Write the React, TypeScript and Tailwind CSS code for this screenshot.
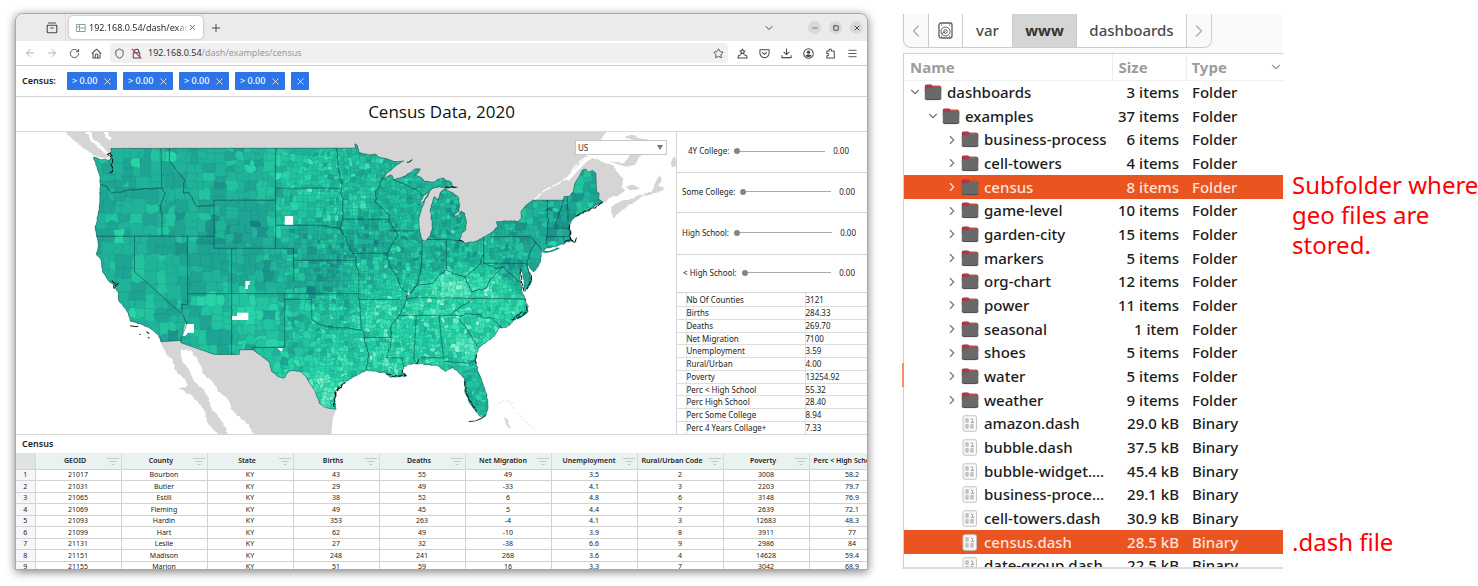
import React from "react";
import {
  ArrowLeft,
  ArrowRight,
  ChevronDown,
  ChevronLeft,
  ChevronRight,
  Menu,
  Minus,
  Plus,
  RotateCw,
  Shield,
  Square,
  Star,
  X,
} from "lucide-react";

type Point = [number, number];

/* ---------- map geometry ---------- */

const EAST = 942;

const pts = (text: string, dx = 0): Point[] =>
  text.split(" ").map((pair) => {
    const [x, y] = pair.split(",").map(Number);
    return [x + dx, y];
  });

const random = (seed: number) => () => {
  seed = (seed + 0x6d2b79f5) | 0;
  let t = Math.imul(seed ^ (seed >>> 15), 1 | seed);
  t = (t + Math.imul(t ^ (t >>> 7), 61 | t)) ^ t;
  return ((t ^ (t >>> 14)) >>> 0) / 4294967296;
};

const line = (list: Point[]) => "M" + list.map((p) => p[0].toFixed(1) + "," + p[1].toFixed(1)).join("L");

const rough = (list: Point[], amount: number, seed: number): Point[] => {
  const rnd = random(seed);
  const out: Point[] = [];
  for (let i = 0; i < list.length - 1; i++) {
    const [ax, ay] = list[i];
    const [bx, by] = list[i + 1];
    const steps = Math.max(1, Math.round(Math.hypot(bx - ax, by - ay) / 6));
    for (let s = 0; s < steps; s++) {
      const k = s / steps;
      const j = s === 0 ? 0 : amount;
      out.push([ax + (bx - ax) * k + (rnd() - 0.5) * 2 * j, ay + (by - ay) * k + (rnd() - 0.5) * 2 * j]);
    }
  }
  out.push(list[list.length - 1]);
  return out;
};

const northCoast = pts(
  "78,70 76,57 84,62 88,82 115,90 135,88 150,97 175,103 195,110 222,108 200,122 175,142 155,162 185,150 192,165 215,158 240,145 255,133 272,132 265,145 255,152 275,158 285,170 310,172 325,163 343,160 350,168 365,172 368,184 383,187 355,190 330,186 310,190 292,205 280,215 268,240 285,225 300,200 285,228 272,265 268,290 270,320 278,345 290,348 300,335 308,310 306,285 302,260 308,235 315,215 325,225 335,200 345,192 365,202 385,215 390,240 388,258 372,272 385,272 395,258 405,265 410,290 408,315 395,325 390,345 408,355 435,350 465,335 490,320 505,305 500,290 530,288 565,290 575,280 573,262 590,240 608,226",
  EAST,
);
const maine = pts("608,226 700,226 703,215 718,215 730,200 735,175 748,155 758,135 768,133 775,142 788,137 798,145 800,200 808,205 806,222 820,232", EAST);
const eastCoast = pts(
  "820,232 800,240 780,252 755,265 735,275 722,295 718,310 725,325 720,335 730,348 710,350 700,358 670,365 645,372 634,385 633,405 625,425 610,440 600,430 592,412 598,440 606,465 595,490 585,500 583,470 578,440 570,430 572,465 577,500 585,520 593,540 595,558 580,572 555,585 530,607 510,608 495,632 465,655 448,668 440,690 437,705 445,740 460,775 472,810 475,840 470,868 455,875 445,865 425,840 405,800 405,765 385,740 370,727 345,738 325,722 270,716 235,718 222,725 215,740 232,752 205,755 185,757 165,742 130,738 110,735 85,748 40,775 20,795 15,820 20,852",
  EAST,
);
const rioGrande = pts("962,852 930,847 912,835 900,800 880,770 870,752 850,738 820,737 805,760 785,752 768,738 762,712 735,690 712,674");
const southLine = pts("672,674 672,688 597,688 497,653 497,646 437,650");
const westCoast = pts(
  "437,650 430,630 405,610 380,598 345,588 340,565 310,525 310,505 297,480 282,470 262,440 258,405 244,390 250,360 240,310 252,255 255,200 255,160 245,125 235,97 260,105 285,105 290,85 287,71",
);

const outline =
  line([
    ...rough(northCoast, 1.6, 3),
    ...maine,
    ...rough(eastCoast, 2.2, 7),
    ...rough(rioGrande, 1, 9),
    ...southLine,
    ...rough(westCoast, 1.2, 11),
  ]) + "Z";

const straightBorders = [
  ...[
    "437,71 440,190", "440,265 440,334", "596,226 596,370", "596,226 781,226", "781,71 781,370",
    "596,370 834,370", "243,334 596,334", "358,334 358,440 503,570", "517,334 517,538 500,538 500,565",
    "649,370 649,688", "517,506 1030,506", "834,370 836,506", "834,406 1020,406", "808,506 808,667 712,667 712,674",
    "808,523 889,523 889,585", "781,190 978,190", "781,301 920,301",
  ].map((t) => line(pts(t))),
  ...[
    "40,283 180,283", "65,385 170,385", "180,318 270,318", "278,345 275,430", "350,345 350,435",
    "290,344 350,343 392,348", "462,335 462,415", "462,415 590,415", "480,335 600,335", "88,440 88,523",
    "88,523 210,523", "90,523 95,615", "95,615 103,620 105,637 182,637", "170,698 218,698 222,725",
    "230,522 262,518 590,522", "205,571 385,571", "260,571 253,700 262,718", "328,571 336,650 342,700",
    "275,698 342,698", "345,709 420,714 437,705", "460,578 485,578 515,607", "590,415 597,445 605,450",
    "655,310 718,310", "650,335 720,335", "700,335 705,355", "712,215 715,290",
  ].map((t) => line(pts(t, EAST))),
].join("");

const riverBorders = [
  ...[
    "255,180 275,185 290,205 330,198 380,192 440,190", "440,190 450,205 435,245 440,265",
    "463,71 463,108 490,145 508,165 505,205 520,203 545,245 595,240", "503,570 515,597 503,625 497,650",
    "889,585 920,602 960,608 990,608 1037,615", "920,301 950,308 975,310 985,330", "963,71 968,130 980,180 975,205 983,220 982,283",
  ].map((t, i) => line(rough(pts(t), 1.8, 20 + i))),
  ...[
    "40,283 30,310 50,340 60,370 80,400 82,430 88,440",
    "155,162 150,185 137,200 140,235 178,270 180,290 205,330 190,355 172,385 180,420 205,460 215,490 235,505 230,525 210,570 185,600 183,660 170,698",
    "192,165 205,170 240,185 268,200 280,215", "275,430 265,475 240,505",
    "240,505 262,480 310,475 330,450 350,435 375,447 405,455 425,440 450,420 462,385",
    "600,335 618,352 635,375", "618,352 600,385 592,412", "103,637 118,690 110,735", "388,580 410,610 445,665",
    "360,570 385,550 430,522", "388,575 410,565 450,570 460,578", "405,455 425,500 470,490 480,465 520,425",
    "462,415 500,430 520,425 545,450 575,475", "652,226 655,290 648,358", "700,226 690,260 675,305",
  ].map((t, i) => line(rough(pts(t, EAST), 1.8, 60 + i))),
].join("");

const inlets = [
  ...["285,82 290,100 288,120 292,140 283,145", "284,86 276,88 288,96", "290,466 300,475 296,490 312,472", "955,845 956,820 962,800 978,780 990,772"].map((t, i) =>
    line(rough(pts(t), 4, 200 + i)),
  ),
  ...[
    "740,272 760,264 780,254 800,244 818,232", "705,350 722,345 738,352 740,338", "718,300 722,325 722,345",
    "572,432 575,470 582,498", "604,450 602,466 592,492", "562,580 580,570 592,556 588,540", "545,585 560,575 578,560",
    "440,688 436,705 441,715", "406,768 410,800 422,828 440,858", "170,746 187,752 205,752 228,752 218,735", "262,716 266,702", "18,815 22,797 40,777",
    "232,112 250,104", "388,345 402,350", "345,187 380,187",
  ].map((t, i) => line(rough(pts(t, EAST), 2.6, 240 + i))),
].join("");

const palette = ["#8ff5d0", "#62ecc3", "#3be2b3", "#29d3a8", "#24c3a0", "#21b399", "#1fa392", "#1c928b", "#188186", "#14697a"];

const anchors = [
  [350, 120, 5.2], [340, 250, 5.2], [520, 270, 5.4], [620, 130, 5], [690, 290, 6.2], [310, 390, 5.3],
  [380, 500, 4.9], [440, 400, 5.2], [570, 420, 5.8], [740, 440, 5.4], [570, 580, 5.1], [720, 560, 3.8],
  [630, 560, 4], [860, 140, 3.8], [850, 250, 4.2], [930, 210, 3.6], [900, 350, 5.4], [920, 450, 6.2],
  [940, 560, 4], [850, 600, 4.2], [830, 690, 3.8], [910, 800, 1.6], [990, 700, 2.8], [1000, 200, 3.9],
  [1060, 340, 5.4], [1100, 460, 3.6], [1150, 250, 4.6], [1170, 400, 5], [1260, 400, 5.1], [1350, 400, 4.8],
  [1290, 290, 5], [1300, 485, 1.1], [1280, 545, 2], [1330, 660, 1.1], [1290, 600, 2.4], [1240, 640, 2.8],
  [1160, 640, 2.8], [1090, 570, 2.4], [1100, 700, 2.4], [1380, 790, 4.6], [1300, 720, 3.4], [1420, 620, 2.6],
  [1450, 570, 2.8], [1450, 500, 2.2], [1400, 460, 2.2], [1500, 440, 5.6], [1470, 370, 4.8], [1540, 290, 5],
  [1630, 300, 5.6], [1720, 190, 4.8],
];

const shade = (x: number, y: number) => {
  let sum = 0;
  let weight = 0;
  for (const [ax, ay, v] of anchors) {
    const w = 1 / Math.pow((ax - x) ** 2 + (ay - y) ** 2 + 200, 1.6);
    sum += v * w;
    weight += w;
  }
  return sum / weight;
};

const cellSize = (x: number) => (x < 620 ? 40 : x < 790 ? 34 : x < 900 ? 22 : x < 1500 ? 16 : 26);

const buildCounties = () => {
  const rnd = random(42);
  const fills = palette.map(() => "");
  const bend = (x: number, y: number): Point => {
    const calm = x > 800 && x < 1080 && y > 200 && y < 520 ? 0.3 : 1;
    const amp = calm * Math.min(3, cellSize(x) / 7);
    return [
      x + amp * (Math.sin(y * 0.17 + x * 0.05) + 0.6 * Math.sin(y * 0.53 + x * 0.13)),
      y + amp * (Math.sin(x * 0.15 + y * 0.06) + 0.6 * Math.sin(x * 0.49 + y * 0.11)),
    ];
  };
  const split = (x0: number, y0: number, x1: number, y1: number) => {
    const w = x1 - x0;
    const h = y1 - y0;
    const xm = (x0 + x1) / 2;
    const ym = (y0 + y1) / 2;
    const target = cellSize(xm) * (0.8 + rnd() * 0.6);
    if (w <= target && h <= target) {
      const spread = xm < 780 ? 1.5 : 2;
      const value = shade(xm, ym) + (rnd() + rnd() + rnd() - 1.5) * spread;
      const index = Math.max(0, Math.min(palette.length - 1, Math.round(value)));
      fills[index] +=
        line([bend(x0, y0), bend(xm, y0), bend(x1, y0), bend(x1, ym), bend(x1, y1), bend(xm, y1), bend(x0, y1), bend(x0, ym)]) + "Z";
      return;
    }
    const k = 0.36 + rnd() * 0.28;
    if (w > h * (0.7 + rnd() * 0.7)) {
      split(x0, y0, x0 + w * k, y1);
      split(x0 + w * k, y0, x1, y1);
    } else {
      split(x0, y0, x1, y0 + h * k);
      split(x0, y0 + h * k, x1, y1);
    }
  };
  split(225, 40, 1790, 890);
  return fills;
};

const countyFills = buildCounties();

const canada =
  line([
    ...rough(pts("150,20 165,36 200,66 225,84 245,95 268,102 280,98 288,84"), 2, 300),
    ...pts("320,180 900,400 1300,360 1500,380"),
    ...pts("700,300 820,232", EAST),
    ...rough(pts("820,232 845,218 868,210 885,198 875,185 880,165 868,150 850,122 820,112 790,100 768,92 800,70 812,45 830,21", EAST), 3, 301),
  ]) + "Z";

const mexico =
  line([
    ...pts("437,650 497,640 700,660 960,800 962,852 952,880 947,930 720,930"),
    ...rough(pts("720,930 690,890 645,850 640,825 605,792 590,765 560,745 552,715 530,680 497,672"), 4, 302),
    ...rough(pts("497,672 500,705 520,730 535,765 560,790 575,810 590,850 620,890 640,930"), 3, 303),
    ...rough(pts("612,930 575,890 565,850 530,812 490,790 520,782 505,760 480,735 470,700 455,690 437,650"), 3, 304),
  ]) + "Z";

const islands = [
  "845,262 843,245 870,230 900,222 935,210 945,212 920,228 895,240 870,262 850,280",
  "935,205 965,202 975,175 990,152 995,165 985,182 1005,188 985,202 950,214",
  "885,185 905,180 930,188 920,195 900,196",
  "840,110 880,115 905,85 890,60 930,70 975,75 930,95 915,120 885,125",
  "885,38 900,30 935,42 960,46 920,48",
  "1022,112 1036,90 1040,125 1026,128",
  "522,875 532,880 542,912 530,900",
].map((t, i) => line(rough(pts(t, EAST), 2.5, 400 + i)) + "Z").join("");

const cays = ["505,832 530,828 548,832 552,850", "560,862 580,880 595,900 618,912", "415,888 425,889"].map((t, i) =>
  line(rough(pts(t, EAST), 4, 500 + i)),
).join("");

const waterways = [
  line(rough(pts("218,20 235,50 262,72 280,90"), 5, 600)),
  line(rough(pts("268,22 275,35 288,42"), 5, 601)),
].join("");

function CensusMap() {
  return (
    <svg className="block h-full w-full" viewBox="3 21 1977 906" preserveAspectRatio="xMidYMid slice" role="img" aria-label="Census counties map">
      <defs>
        <clipPath id="land">
          <path d={outline} />
        </clipPath>
      </defs>
      <rect x="-500" y="0" width="3000" height="1000" fill="#fff" />
      <g fill="#d5d5d5">
        <path d={canada} />
        <path d={mexico} />
        <path d={islands} />
      </g>
      <path d={cays} fill="none" stroke="#d5d5d5" strokeWidth="2" strokeDasharray="8 5" />
      <path d={waterways} fill="none" stroke="#fff" strokeWidth="9" />
      <path d={line(rough(pts("612,226 640,200 690,172 715,158 740,120 775,90", EAST), 2, 610))} fill="none" stroke="#fff" strokeWidth="4" strokeDasharray="30 6" />
      <path d={line(pts("712,165 735,140 765,108 790,92", EAST))} fill="none" stroke="#fff" strokeWidth="11" />
      <g clipPath="url(#land)">
        <path d={outline} fill="#22b89a" />
        {countyFills.map((d, i) => (
          <path key={palette[i]} d={d} fill={palette[i]} stroke="#0c6b62" strokeOpacity="0.26" strokeWidth="1" />
        ))}
        <path
          d="M808,273h25v27h-25zM690,468h13v12h-5v12h-8zM665,563h34v22h-49v-12h15zM510,597h26v26h-18l-8,10h-9zM785,668h16v10h-6zM1176,500l8,4l-4,6l-7,-2z"
          fill="#fff"
        />
      </g>
      <g fill="none" stroke="#0a3f40" strokeLinejoin="round">
        <path d={straightBorders} strokeWidth="2" strokeOpacity="0.8" />
        <path d={riverBorders} strokeWidth="2.2" strokeOpacity="0.85" />
        <path d={outline} strokeWidth="2" strokeOpacity="0.7" />
        <path d={inlets} strokeWidth="3" stroke="#06181b" strokeDasharray="16 3" />
        <path d="M345,602l14,2l10,0M372,628h4M394,620l8,6M398,636l5,4M1360,889l20,-2l18,-8l12,-8" strokeWidth="3" stroke="#0c2b2d" />
      </g>
      <path d={line(rough(pts("640,382 665,378 688,370", EAST), 1, 620))} fill="none" stroke="#178b85" strokeWidth="5" />
    </svg>
  );
}

/* ---------- icons ---------- */

const stroke = { fill: "none", stroke: "currentColor", strokeWidth: 1.1, strokeLinecap: "round", strokeLinejoin: "round" } as const;

const RecentIcon = () => (
  <svg className="size-3" viewBox="0 0 12 12" {...stroke}>
    <path d="M2.5 1h7M1.3 3.2h9.4M2 3.2h8a.8.8 0 0 1 .8.8v5.5a1.3 1.3 0 0 1-1.3 1.3h-7A1.3 1.3 0 0 1 1.200 9.500V4A.8.8 0 0 1 2 3.200ZM4.800 6h2.500" />
  </svg>
);
const LayoutIcon = () => (
  <svg className="size-[10px] shrink-0 text-[#8aa0ad]" viewBox="0 0 10 10" {...stroke} strokeWidth={1}>
    <path d="M.8 1.500h8.400v7H.8ZM3.500 1.500v7M3.500 5h5.700M.8 4h2.700" />
  </svg>
);
const HomeIcon = () => (
  <svg className="size-[11px]" viewBox="0 0 12 12" {...stroke}>
    <path d="M1.200 5.800 6 1.300l4.800 4.500M2.200 5v5.800h7.600V5M4.600 10.800V8a1.400 1.400 0 0 1 2.800 0v2.800" />
  </svg>
);
const LockOffIcon = () => (
  <svg className="size-[11px]" viewBox="0 0 12 12" {...stroke}>
    <path d="M3.500 5.200V3.800a2.500 2.500 0 0 1 5 0v1.400M2.500 5.200h7v5.600h-7Z" />
    <path d="M1.200 1.200 11 11" stroke="#e22850" strokeWidth="1.300" />
  </svg>
);
const TrayStarIcon = () => (
  <svg className="size-[11px]" viewBox="0 0 12 12" {...stroke}>
    <path d="m6 1 .9 1.900 2 .3-1.500 1.400.4 2L6 5.700l-1.800.9.400-2L3.100 3.200l2-.3ZM3.500 8H1.800L1 10.800h10L10.200 8H8.500" />
  </svg>
);
const PocketIcon = () => (
  <svg className="size-[11px]" viewBox="0 0 12 12" {...stroke}>
    <path d="M1 2h10v3.500a5 5 0 0 1-10 0ZM3.800 5 6 7l2.200-2" />
  </svg>
);
const DownloadIcon = () => (
  <svg className="size-[11px]" viewBox="0 0 12 12" {...stroke}>
    <path d="M6 .8v6.400M3.200 4.600 6 7.300l2.800-2.700M1 8.300v2.200h10V8.300" />
  </svg>
);
const AccountIcon = () => (
  <svg className="size-[11px]" viewBox="0 0 12 12">
    <circle cx="6" cy="6" r="5.200" fill="none" stroke="currentColor" strokeWidth="1.100" />
    <circle cx="6" cy="4.500" r="1.900" fill="currentColor" />
    <path d="M2.700 8.200c1-1.600 5.600-1.600 6.600 0-1.500 2.200-5.100 2.200-6.600 0Z" fill="currentColor" />
  </svg>
);
const ExtensionIcon = () => (
  <svg className="size-[11px]" viewBox="0 0 12 12" {...stroke}>
    <path d="M2 11V8.500h.8a1.300 1.300 0 0 0 0-2.600H2V3.200h2.500V2.300a1.300 1.300 0 0 1 2.600 0v.9h3V11Z" />
  </svg>
);
const DiskIcon = () => (
  <svg className="h-[17px] w-[15px]" viewBox="0 0 15 17" fill="none" stroke="#5c5c5c">
    <rect x="1" y="1" width="13" height="15" rx="2" strokeWidth="1.300" />
    <circle cx="7.500" cy="9.500" r="4.500" />
    <circle cx="7.500" cy="9.500" r="1.800" />
    <path d="M3 3h1M11 3h1M3 14.300h1M11 14.300h1M7.500 9.500 4 11.500" />
  </svg>
);
const FilterIcon = () => (
  <svg className="h-[7px] w-3 shrink-0" viewBox="0 0 12 7" stroke="#c3c9c9">
    <path d="M0 .5h12M2.500 3.500h7M4.500 6.500h3" />
  </svg>
);
const FolderIcon = () => (
  <svg className="h-[17px] w-[18px] shrink-0" viewBox="0 0 18 17">
    <path d="M.8 2.300A1.800 1.800 0 0 1 2.600.5h4.600l1.300 1.200h7A1.700 1.700 0 0 1 17.200 3.400V8H.8Z" fill="#8f3040" />
    <path d="M2 1h5l1.300 1.200h7.500l.9 1.300H8.500L7 4.500H1.200Z" fill="#b23647" />
    <path d="M8 1.700h7.500A1.700 1.700 0 0 1 17.200 3.400H9Z" fill="#b8553f" />
    <path d="M.8 5.200a1 1 0 0 1 1-1h5L8.300 3h8a1 1 0 0 1 1 1v10a1.800 1.800 0 0 1-1.800 1.800H2.600A1.800 1.800 0 0 1 .8 14Z" fill="#696969" />
    <path d="M1 14.300c.3.900.9 1.300 1.700 1.300h12.700c.9 0 1.500-.5 1.700-1.300" fill="none" stroke="#4b4b4b" />
  </svg>
);
const BinaryIcon = () => (
  <svg className="h-[17px] w-[18px] shrink-0" viewBox="0 0 18 17" fill="none" stroke="#a6a6a6">
    <rect x="2" y=".7" width="13.500" height="15.600" rx="1.800" fill="#f7f7f7" stroke="#c4c4c4" />
    <rect x="5" y="4" width="2" height="3" />
    <path d="M10 4h1.500v3.500M10 7.500h3" />
    <rect x="5" y="9.800" width="2" height="3" />
    <rect x="10" y="9.800" width="2" height="3" />
  </svg>
);

/* ---------- browser window ---------- */

const iconButton = "flex w-[22px] items-center justify-center";

function TitleBar() {
  return (
    <div className="flex h-[27px] items-center rounded-t-lg bg-[#ebebeb] text-[#4a4a4a]">
      <button aria-label="Recent tabs" className="flex h-full w-[50px] items-center justify-end border-r border-[#dcdcdc] pr-[7px]">
        <RecentIcon />
      </button>
      <div className="ml-[3px] flex h-[23px] w-[134px] items-center rounded bg-white pr-[6px] pl-[7px] shadow-[0_0_2px_rgba(0,0,0,0.4)]">
        <LayoutIcon />
        <span className="ml-[3px] flex-1 overflow-hidden whitespace-nowrap text-[9px] leading-4 text-[#2b2b2b] [mask-image:linear-gradient(to_right,#000_88%,transparent)]">
          192.168.0.54/dash/examples/census
        </span>
        <button aria-label="Close tab">
          <X className="size-[9px]" />
        </button>
      </div>
      <button aria-label="New tab" className="ml-[7px]">
        <Plus className="size-3" />
      </button>
      <button aria-label="List all tabs" className="mr-[33px] ml-auto">
        <ChevronDown className="size-3" />
      </button>
      <div className="mr-1 flex gap-2">
        <button aria-label="Minimize" className="flex size-[13px] items-center justify-center rounded-full bg-[#d9d9d9]">
          <Minus className="size-2" />
        </button>
        <button aria-label="Maximize" className="flex size-[13px] items-center justify-center rounded-full bg-[#d9d9d9]">
          <Square className="size-[6px]" strokeWidth={4} />
        </button>
        <button aria-label="Close" className="flex size-[13px] items-center justify-center rounded-full bg-[#d9d9d9]">
          <X className="size-2" strokeWidth={3} />
        </button>
      </div>
    </div>
  );
}

function Toolbar() {
  return (
    <div className="flex h-[25px] items-center border-b border-[#cfcfcf] pr-1 pl-[3px] text-[#4a4a4a]">
      <button aria-label="Back" className={iconButton + " text-[#b0b0b0]"}>
        <ArrowLeft className="size-3" />
      </button>
      <button aria-label="Forward" className={iconButton + " text-[#b0b0b0]"}>
        <ArrowRight className="size-3" />
      </button>
      <button aria-label="Reload" className={iconButton}>
        <RotateCw className="size-[11px]" />
      </button>
      <button aria-label="Home" className={iconButton}>
        <HomeIcon />
      </button>
      <div className="ml-[3px] flex h-5 flex-1 items-center gap-[6px] rounded-sm bg-[#f0f0f0] px-1">
        <Shield className="size-[11px]" />
        <LockOffIcon />
        <p className="flex-1 text-[9px] leading-4 text-[#999]">
          <span className="text-[#333]">192.168.0.54</span>/dash/examples/census
        </p>
        <button aria-label="Bookmark">
          <Star className="size-[11px]" />
        </button>
      </div>
      <div className="ml-[3px] flex">
        <button aria-label="Bookmarks tray" className={iconButton}><TrayStarIcon /></button>
        <button aria-label="Pocket" className={iconButton}><PocketIcon /></button>
        <button aria-label="Downloads" className={iconButton}><DownloadIcon /></button>
        <button aria-label="Account" className={iconButton}><AccountIcon /></button>
        <button aria-label="Extensions" className={iconButton}><ExtensionIcon /></button>
        <button aria-label="Menu" className={iconButton}><Menu className="size-[11px]" /></button>
      </div>
    </div>
  );
}

function FilterBar() {
  return (
    <div className="flex h-[31px] items-center gap-[6px] border-b border-[#d4d4d4] pl-[6px]">
      <span className="w-[39px] text-[9px] font-semibold text-[#222]">Census:</span>
      {[1, 2, 3, 4].map((n) => (
        <button key={n} className="flex h-[18px] w-[50px] items-center justify-between rounded-[1px] bg-[#2c74e8] pr-1 pl-[5px] text-[9px] font-medium text-white">
          &gt; 0.00
          <X className="size-[11px]" strokeWidth={1.750} />
        </button>
      ))}
      <button aria-label="Clear all" className="flex size-[18px] items-center justify-center rounded-[1px] bg-[#2c74e8] text-white">
        <X className="size-[11px]" strokeWidth={1.750} />
      </button>
    </div>
  );
}

const sliders = [
  { id: "college4", label: "4Y College:", row: "h-[41px] pl-[11px] pr-[18px]" },
  { id: "college", label: "Some College:", row: "h-[40px] pl-[5px] pr-3" },
  { id: "high", label: "High School:", row: "h-[42px] pl-[5px] pr-[11px]" },
  { id: "lessHigh", label: "< High School:", row: "h-[38px] pl-[6px] pr-[12px]" },
];

const stats = [
  ["Nb Of Counties", "3121"],
  ["Births", "284.33"],
  ["Deaths", "269.70"],
  ["Net Migration", "7100"],
  ["Unemployment", "3.59"],
  ["Rural/Urban", "4.00"],
  ["Poverty", "13254.92"],
  ["Perc < High School", "55.32"],
  ["Perc High School", "28.40"],
  ["Perc Some College", "8.94"],
  ["Perc 4 Years Collage+", "7.33"],
];

function SidePanel() {
  return (
    <aside className="w-[191px] shrink-0 overflow-hidden border-l border-[#d4d4d4] text-[8px] text-[#222]">
      {sliders.map((s) => (
        <div key={s.id} className={"flex items-center border-b border-[#d4d4d4] pb-[2px] " + s.row}>
          <label htmlFor={s.id} className="whitespace-nowrap">{s.label}</label>
          <input
            id={s.id}
            type="range"
            min={0}
            max={100}
            defaultValue={0}
            className="mx-[5px] h-px min-w-0 flex-1 appearance-none bg-[#a8a8a8] [&::-webkit-slider-thumb]:size-[6px] [&::-webkit-slider-thumb]:appearance-none [&::-webkit-slider-thumb]:rounded-full [&::-webkit-slider-thumb]:bg-[#858585]"
          />
          <output htmlFor={s.id} className="ml-[3px]">0.00</output>
        </div>
      ))}
      <table className="w-full table-fixed border-collapse">
        <colgroup>
          <col className="w-[9px]" />
          <col className="w-[119px]" />
          <col />
        </colgroup>
        <tbody>
          {stats.map(([name, value]) => (
            <tr key={name} className="h-[13px] border-b border-[#dedede] leading-[11px] nth-[4n]:h-3">
              <td className="border-r border-[#dedede] p-0" />
              <th scope="row" className="border-r border-[#dedede] p-0 text-left font-normal">{name}</th>
              <td className="p-0">{value}</td>
            </tr>
          ))}
        </tbody>
      </table>
    </aside>
  );
}

const columns = ["GEOID", "County", "State", "Births", "Deaths", "Net Migration", "Unemployment", "Rural/Urban Code", "Poverty", "Perc < High School"];

const records = [
  ["21017", "Bourbon", "KY", "43", "55", "49", "3.5", "2", "3008", "58.2"],
  ["21031", "Butler", "KY", "29", "49", "-33", "4.1", "3", "2203", "79.7"],
  ["21065", "Estill", "KY", "38", "52", "6", "4.8", "6", "3148", "76.9"],
  ["21069", "Fleming", "KY", "49", "45", "5", "4.4", "7", "2639", "72.1"],
  ["21093", "Hardin", "KY", "353", "263", "-4", "4.1", "3", "12683", "48.3"],
  ["21099", "Hart", "KY", "62", "49", "-10", "3.9", "8", "3911", "77"],
  ["21131", "Leslie", "KY", "27", "32", "-38", "6.6", "9", "2986", "84"],
  ["21151", "Madison", "KY", "248", "241", "268", "3.6", "4", "14628", "59.4"],
  ["21155", "Marion", "KY", "51", "59", "16", "3.3", "7", "3042", "68.9"],
];

function CensusTable() {
  return (
    <section>
      <h2 className="h-[18px] pl-[6px] text-[9px] leading-[18px] font-semibold text-[#222]">Census</h2>
      <div className="h-[116px] overflow-hidden">
        <table className="w-[879px] table-fixed border-collapse text-center text-[7px] text-[#222]">
          <colgroup>
            <col className="w-[19px]" />
            {columns.map((c) => (
              <col key={c} className="w-[86px]" />
            ))}
          </colgroup>
          <thead>
            <tr className="h-[15px] bg-[#eaf1f1]">
              <th className="border-r border-[#d6dada] bg-[#dfe3e3] p-0" />
              {columns.map((c) => (
                <th key={c} className="border-r border-[#d6dada] p-0 font-semibold">
                  <div className="flex items-center pr-[2px] leading-4">
                    <span className={"flex-1 whitespace-nowrap " + (c.length < 8 ? "pl-2" : c.length < 14 ? "pl-1" : "text-left pl-1")}>{c}</span>
                    <FilterIcon />
                  </div>
                </th>
              ))}
            </tr>
          </thead>
          <tbody>
            {records.map((r, i) => (
              <tr key={r[0]} className="h-[11px] border-t border-[#d2d2d2] leading-[10px] even:h-3 even:leading-[11px]">
                <th scope="row" className="border-r border-[#d2d2d2] bg-[#f7f7f7] p-0 font-normal">{i + 1}</th>
                {r.map((v, j) => (
                  <td key={j} className="border-r border-[#d2d2d2] p-0">{v}</td>
                ))}
              </tr>
            ))}
          </tbody>
        </table>
      </div>
    </section>
  );
}

function BrowserWindow() {
  return (
    <main className="min-w-0 flex-1 overflow-hidden rounded-t-lg border border-[#a9a9a9] bg-white font-['Noto_Sans','Open_Sans',sans-serif] shadow-[0_2px_10px_rgba(0,0,0,0.5)]">
      <TitleBar />
      <Toolbar />
      <FilterBar />
      <h1 className="h-[35px] border-b border-[#d8d8d8] text-center font-['Open_Sans','Noto_Sans',sans-serif] text-[17px] leading-[30px] text-[#111]">Census Data, 2020</h1>
      <div className="flex h-[303px] border-b border-[#d4d4d4]">
        <div className="relative min-w-0 flex-1">
          <CensusMap />
          <div className="absolute top-2 right-[9px] h-[15px] w-[92px]">
            <select aria-label="Region" className="block h-full w-full appearance-none border border-[#c8c8c8] bg-white px-[2px] text-[8px] leading-3 text-[#333]">
              <option>US</option>
            </select>
            <svg className="pointer-events-none absolute top-[5px] right-1 h-[5px] w-[6px]" viewBox="0 0 6 5">
              <path d="M0 0h6L3 5Z" fill="#777" />
            </svg>
          </div>
        </div>
        <SidePanel />
      </div>
      <CensusTable />
    </main>
  );
}

/* ---------- file manager ---------- */

type Entry = { name: string; size: string; level?: number; open?: boolean };

const item = (name: string, size: string): Entry => ({ name, size });

const entries: Entry[] = [
  { name: "dashboards", size: "3 items", level: 0, open: true },
  { name: "examples", size: "37 items", level: 1, open: true },
  item("business-process", "6 items"),
  item("cell-towers", "4 items"),
  item("census", "8 items"),
  item("game-level", "10 items"),
  item("garden-city", "15 items"),
  item("markers", "5 items"),
  item("org-chart", "12 items"),
  item("power", "11 items"),
  item("seasonal", "1 item"),
  item("shoes", "5 items"),
  item("water", "5 items"),
  item("weather", "9 items"),
  item("amazon.dash", "29.0 kB"),
  item("bubble.dash", "37.5 kB"),
  item("bubble-widget.…", "45.4 kB"),
  item("business-proce…", "29.1 kB"),
  item("cell-towers.dash", "30.9 kB"),
  item("census.dash", "28.5 kB"),
  item("date-group.dash", "22.5 kB"),
];

const indent = ["pl-[4px]", "pl-[22px]", "pl-[41px]"];

function FileManager() {
  return (
    <section className="relative h-[555px] w-[381px] shrink-0 overflow-hidden border-b-2 border-[#dcdcdc] bg-[#fafafa] pl-px font-['Noto_Sans',sans-serif] text-[15px] text-[#1c1c1c]">
      <nav aria-label="Path" className="h-[39px]">
        <div className="flex h-[34px] w-[309px] items-stretch rounded-b-lg border border-t-0 border-[#cdcdcd] text-[#4a4a4a]">
          <button aria-label="Scroll left" className="flex w-6 items-center justify-center text-[#aaa]">
            <ChevronLeft className="size-5" strokeWidth={1.500} />
          </button>
          <button aria-label="Disk" className="flex w-[34px] items-center justify-center border-l border-[#cdcdcd] bg-white">
            <DiskIcon />
          </button>
          <button className="w-[50px] border-l border-[#cdcdcd] bg-white font-medium">var</button>
          <button className="w-16 border-l border-[#cdcdcd] bg-[#d5d5d5] font-bold text-[#333]">www</button>
          <button className="flex-1 border-x border-[#cdcdcd] bg-white font-medium">dashboards</button>
          <button aria-label="Scroll right" className="flex w-6 items-center justify-center text-[#aaa]">
            <ChevronRight className="size-5" strokeWidth={1.500} />
          </button>
        </div>
      </nav>
      <div className="border-t border-l border-[#d0d0d0] bg-white">
        <table className="w-full table-fixed border-collapse whitespace-nowrap">
          <colgroup>
            <col />
            <col className="w-[74px]" />
            <col className="w-[97px]" />
          </colgroup>
          <thead>
            <tr className="h-[26px] border-b border-[#f0f0f0] text-left leading-6 text-[#9c9c9c]">
              <th className="border-r border-[#ededed] p-0 pl-[6px] font-bold">Name</th>
              <th className="border-r border-[#ededed] p-0 pl-[6px] font-bold">Size</th>
              <th className="p-0 pl-[5px] font-bold">
                <div className="flex items-center justify-between">
                  Type
                  <ChevronDown className="size-[14px]" strokeWidth={2} />
                </div>
              </th>
            </tr>
          </thead>
          <tbody>
            {entries.map((e, i) => {
              const selected = e.name === "census" || e.name === "census.dash";
              const isFile = i > 13;
              return (
                <tr key={e.name} className={"h-6 leading-[23px] nth-[3n]:h-[23px] " + (selected ? "bg-[#e95420] text-[#fde3d9]" : "")}>
                  <td className="p-0 font-medium">
                    <div className={"flex items-center " + indent[e.level ?? 2]}>
                      <span className={"flex w-4 " + (selected ? "" : "text-[#777]")}>
                        {isFile ? null : e.open ? (
                          <ChevronDown className="size-[14px]" strokeWidth={2} />
                        ) : (
                          <ChevronRight className="size-[14px]" strokeWidth={2} />
                        )}
                      </span>
                      {isFile ? <BinaryIcon /> : <FolderIcon />}
                      <span className="ml-[5px]">{e.name}</span>
                    </div>
                  </td>
                  <td className="p-0 pr-[7px] text-right font-medium">{e.size}</td>
                  <td className="p-0 pl-[6px] font-medium">{isFile ? "Binary" : "Folder"}</td>
                </tr>
              );
            })}
          </tbody>
        </table>
      </div>
      <span className="absolute top-[349px] left-0 h-6 w-[2px] bg-[#f0906c]" />
    </section>
  );
}

export default function App() {
  return (
    <div className="flex items-start bg-white pt-[13px] pb-4 pl-[15px]">
      <BrowserWindow />
      <div className="mt-px ml-[34px]">
        <FileManager />
      </div>
      <aside className="ml-[9px] w-[186px] shrink-0 pt-[157px] font-['Noto_Sans',sans-serif] text-[24px] leading-[30px] whitespace-nowrap text-[#f00]">
        <p>
          Subfolder where
          <br />
          geo files are
          <br />
          stored.
        </p>
        <p className="mt-[267px]">.dash file</p>
      </aside>
    </div>
  );
}
